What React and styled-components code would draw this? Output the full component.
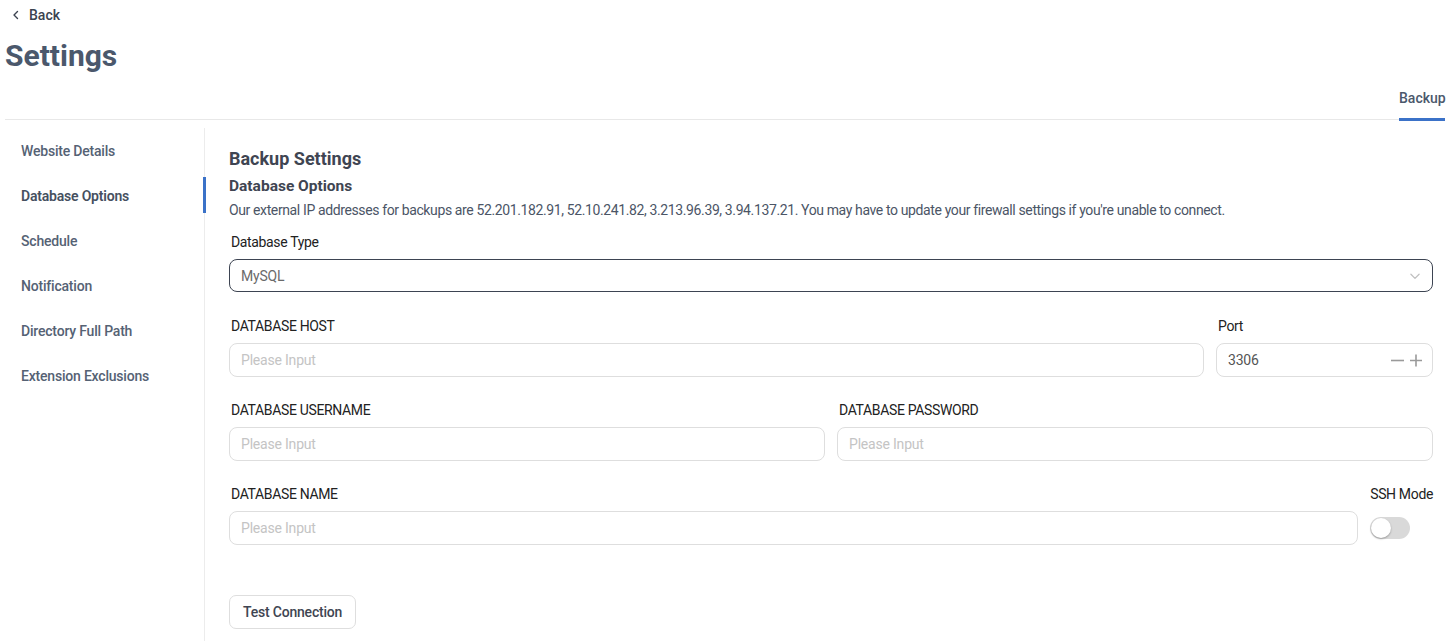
import React from "react";
import styled, { createGlobalStyle } from "styled-components";

const Global = createGlobalStyle`
  * { box-sizing: border-box; }
  html, body { margin: 0; padding: 0; background: #fff; }
  body { font-family: Roboto, "Liberation Sans", sans-serif; color: #333; }
`;

const Page = styled.div`
  width: 1455px;
  padding: 0 10px 0 5px;
`;

const BackLink = styled.a`
  display: flex;
  align-items: center;
  gap: 7px;
  height: 30px;
  padding-left: 5px;
  font-size: 14px;
  font-weight: 500;
  color: #3b4350;
  text-decoration: none;
`;

const Title = styled.h1`
  margin: 6px 0 0;
  font-size: 30px;
  font-weight: 700;
  color: #4b586c;
  line-height: 40px;
`;

const TabBar = styled.div`
  display: flex;
  justify-content: flex-end;
  border-bottom: 1px solid #e8e8e8;
  margin-top: 8px;
`;

const Tab = styled.div`
  padding: 6px 0 12px;
  font-size: 14px;
  font-weight: 500;
  color: #4b586c;
  border-bottom: 3px solid ${p => (p.$active ? "#3b72c8" : "transparent")};
  margin-bottom: -2px;
  width: 46px;
`;

const Body = styled.div`
  display: flex;
  padding: 8px 12px 0 0;
`;

const Sidebar = styled.nav`
  width: 200px;
  flex-shrink: 0;
  border-right: 1px solid #ececec;
  min-height: 520px;
`;

const NavItem = styled.div`
  position: relative;
  height: 45px;
  display: flex;
  align-items: center;
  padding-left: 16px;
  font-size: 14px;
  letter-spacing: -0.2px;
  font-weight: ${p => (p.$active ? 600 : 500)};
  color: ${p => (p.$active ? "#46505f" : "#556274")};
  &::after {
    content: "";
    display: ${p => (p.$active ? "block" : "none")};
    position: absolute;
    right: -2px;
    top: 4px;
    width: 3px;
    height: 36px;
    background: #3b72c8;
  }
`;

const Content = styled.main`
  flex: 1;
  padding: 21px 0 0 24px;
`;

const H2 = styled.h2`
  margin: 0;
  font-size: 18px;
  font-weight: 700;
  color: #3f4552;
  line-height: 20px;
`;

const H3 = styled.h3`
  margin: 8px 0 0;
  font-size: 15.5px;
  font-weight: 700;
  color: #3f4552;
  line-height: 18px;
`;

const Desc = styled.p`
  margin: 7px 0 0;
  font-size: 14px;
  color: #4b5566;
  line-height: 16px;
  letter-spacing: -0.38px;
`;

const Row = styled.div`
  display: flex;
  gap: 12px;
  margin-top: ${p => p.$mt || 16}px;
`;

const Field = styled.div`
  display: flex;
  flex-direction: column;
  flex: ${p => (p.$w ? `0 0 ${p.$w}` : "1 1 0")};
  min-width: 0;
`;

const Label = styled.label`
  display: flex;
  justify-content: ${p => (p.$right ? "flex-end" : "flex-start")};
  font-size: 14px;
  letter-spacing: -0.35px;
  color: #222;
  padding-left: 2px;
  line-height: 16px;
  height: 17px;
  margin-bottom: 8px;
  white-space: nowrap;
`;

const Input = styled.div`
  height: 34px;
  border: 1px solid #dedede;
  border-radius: 8px;
  display: flex;
  align-items: center;
  padding: 0 10px 0 11px;
  font-size: 14px;
  letter-spacing: -0.2px;
  color: ${p => (p.$value ? "#555" : "#c4c4c4")};
  justify-content: space-between;
`;

const Select = styled(Input)`
  height: 33px;
  border-color: #3d4452;
  color: #6a6a6a;
`;

const Steppers = styled.div`
  display: flex;
  align-items: center;
  gap: 6px;
`;

const Toggle = styled.div`
  width: 40px;
  height: 22px;
  border-radius: 11px;
  background: #d9d9d9;
  position: relative;
  margin-top: 6px;
  &::after {
    content: "";
    position: absolute;
    left: 1px;
    top: 1px;
    width: 20px;
    height: 20px;
    border-radius: 50%;
    background: #fff;
    box-shadow: 0 1px 2px rgba(0,0,0,0.3);
  }
`;

const Button = styled.button`
  margin-top: 50px;
  height: 34px;
  padding: 0 13px;
  border: 1px solid #dedede;
  border-radius: 7px;
  background: #fff;
  font-family: inherit;
  font-size: 14px;
  letter-spacing: -0.2px;
  font-weight: 500;
  color: #3f4552;
`;

const Chevron = ({ dir = "left", size = 12, color = "#3b4350" }) => (
  <svg width={size} height={size} viewBox="0 0 12 12" fill="none">
    {dir === "left" ? (
      <path d="M7.5 2.5 4 6l3.5 3.5" stroke={color} strokeWidth="1.4" strokeLinecap="round" strokeLinejoin="round" />
    ) : (
      <path d="M2.5 4.5 6 8l3.5-3.5" stroke={color} strokeWidth="1.1" strokeLinecap="round" strokeLinejoin="round" />
    )}
  </svg>
);

const nav = [
  "Website Details",
  "Database Options",
  "Schedule",
  "Notification",
  "Directory Full Path",
  "Extension Exclusions",
];

export default function App() {
  return (
    <Page>
      <Global />
      <BackLink href="#">
        <Chevron />
        Back
      </BackLink>
      <Title>Settings</Title>
      <TabBar>
        <Tab $active>Backup</Tab>
      </TabBar>
      <Body>
        <Sidebar>
          {nav.map(n => (
            <NavItem key={n} $active={n === "Database Options"}>{n}</NavItem>
          ))}
        </Sidebar>
        <Content>
          <H2>Backup Settings</H2>
          <H3>Database Options</H3>
          <Desc>
            Our external IP addresses for backups are 52.201.182.91, 52.10.241.82, 3.213.96.39, 3.94.137.21. You may have to update your firewall settings if you're unable to connect.
          </Desc>
          <Row $mt={16}>
            <Field>
              <Label>Database Type</Label>
              <Select $value>
                MySQL
                <Chevron dir="down" size={14} color="#c0c0c0" />
              </Select>
            </Field>
          </Row>
          <Row $mt={26}>
            <Field>
              <Label>DATABASE HOST</Label>
              <Input>Please Input</Input>
            </Field>
            <Field $w="217px">
              <Label>Port</Label>
              <Input $value>
                3306
                <Steppers>
                  <svg width="13" height="13" viewBox="0 0 13 13"><path d="M0 6.5h13" stroke="#9a9a9a" strokeWidth="1.6" /></svg>
                  <svg width="12" height="13" viewBox="0 0 12 13"><path d="M0 6.5h12M6 0.5v12" stroke="#9a9a9a" strokeWidth="1.6" /></svg>
                </Steppers>
              </Input>
            </Field>
          </Row>
          <Row $mt={25}>
            <Field>
              <Label>DATABASE USERNAME</Label>
              <Input>Please Input</Input>
            </Field>
            <Field>
              <Label>DATABASE PASSWORD</Label>
              <Input>Please Input</Input>
            </Field>
          </Row>
          <Row $mt={25}>
            <Field>
              <Label>DATABASE NAME</Label>
              <Input>Please Input</Input>
            </Field>
            <Field $w="63px">
              <Label $right>SSH Mode</Label>
              <Toggle />
            </Field>
          </Row>
          <Button>Test Connection</Button>
        </Content>
      </Body>
    </Page>
  );
}
